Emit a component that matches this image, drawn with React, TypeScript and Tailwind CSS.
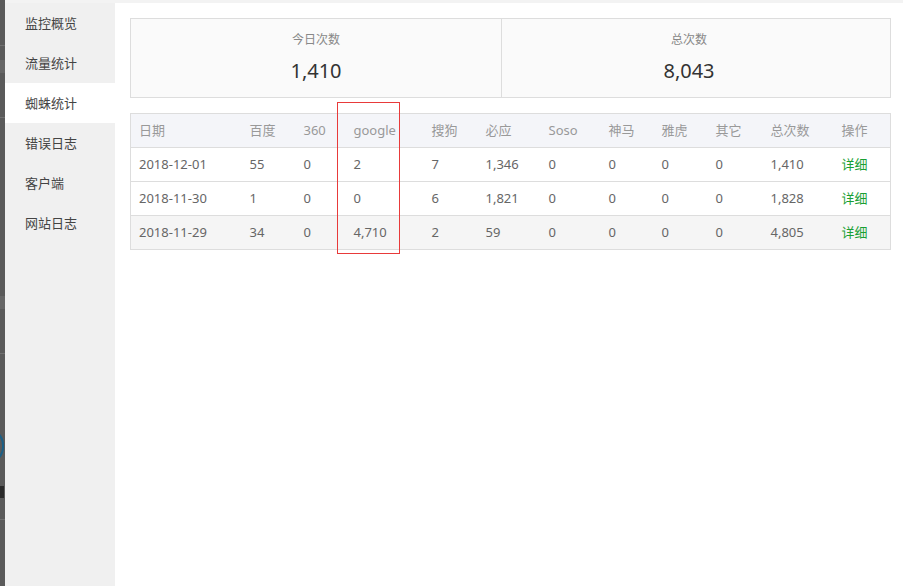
import React from "react";

const menu = ["监控概览", "流量统计", "蜘蛛统计", "错误日志", "客户端", "网站日志"];
const cols: { t: string; w: number }[] = [
  { t: "日期", w: 111 },
  { t: "百度", w: 54 },
  { t: "360", w: 50 },
  { t: "google", w: 78 },
  { t: "搜狗", w: 54 },
  { t: "必应", w: 63 },
  { t: "Soso", w: 60 },
  { t: "神马", w: 53 },
  { t: "雅虎", w: 54 },
  { t: "其它", w: 55 },
  { t: "总次数", w: 71 },
  { t: "操作", w: 57 },
];
const rows = [
  ["2018-12-01", "55", "0", "2", "7", "1,346", "0", "0", "0", "0", "1,410"],
  ["2018-11-30", "1", "0", "0", "6", "1,821", "0", "0", "0", "0", "1,828"],
  ["2018-11-29", "34", "0", "4,710", "2", "59", "0", "0", "0", "0", "4,805"],
];

export default function App() {
  return (
    <div
      className="flex w-[903px] h-[586px] overflow-hidden bg-white"
      style={{ fontFamily: '"Noto Sans", "Noto Sans CJK SC", sans-serif' }}
    >
      {/* dimmed background strip */}
      <div className="relative w-[5px] h-full bg-[#5a5a5a] shrink-0 overflow-hidden">
        <div className="absolute left-0 top-[45px] w-[5px] h-px bg-[#707070]" />
        <div className="absolute left-0 top-[60px] w-[5px] h-[13px] bg-[#666]" />
        <div className="absolute left-0 top-[117px] w-[5px] h-px bg-[#707070]" />
        <div className="absolute left-0 top-[296px] w-[5px] h-[13px] bg-[#666]" />
        <div className="absolute left-0 top-[353px] w-[5px] h-px bg-[#707070]" />
        <div className="absolute left-[-30px] top-[428px] w-[34px] h-[36px] rounded-full border-2 border-[#1b5f86]" />
        <div className="absolute left-0 top-[486px] w-[4px] h-[12px] bg-[#2a2a2a]" />
        <div className="absolute left-0 top-[519px] w-[5px] h-px bg-[#707070]" />
      </div>
      <div className="flex flex-col flex-1 h-full">
        <div className="h-[3px] bg-[#f3f3f3] shrink-0" />
        <div className="flex flex-1">
          {/* sidebar */}
          <div className="w-[110px] bg-[#f0f0f0] shrink-0">
            {menu.map((m, i) => (
              <div
                key={m}
                className={`h-[40px] flex items-center pl-[20px] pt-[1px] text-[13px] text-[#444] ${
                  i === 2 ? "bg-white" : ""
                }`}
              >
                {m}
              </div>
            ))}
          </div>
          {/* main */}
          <div className="flex-1 pl-[15px] pr-[13px] pt-[15px]">
            <div className="flex h-[80px] border border-[#dddddd] bg-[#fafafa]">
              <div className="w-[371px] flex flex-col items-center border-r border-[#dddddd]">
                <div className="mt-[12px] text-[12px] leading-[18px] text-[#888]">今日次数</div>
                <div className="mt-[10px] text-[20px] leading-[24px] text-[#333]">1,410</div>
              </div>
              <div className="flex-1 flex flex-col items-center pr-[14px]">
                <div className="mt-[12px] text-[12px] leading-[18px] text-[#888]">总次数</div>
                <div className="mt-[10px] text-[20px] leading-[24px] text-[#333]">8,043</div>
              </div>
            </div>
            <div className="relative mt-[15px]">
              <table className="border-collapse table-fixed w-[760px] border border-[#dddddd] text-[13px]">
                <colgroup>
                  {cols.map((c) => (
                    <col key={c.t} style={{ width: c.w }} />
                  ))}
                </colgroup>
                <thead>
                  <tr className="h-[34px] bg-[#f4f5f9]">
                    {cols.map((c) => (
                      <th key={c.t} className="text-left font-normal pl-[8px] text-[#999] whitespace-nowrap">
                        {c.t}
                      </th>
                    ))}
                  </tr>
                </thead>
                <tbody>
                  {rows.map((r, i) => (
                    <tr
                      key={i}
                      className={`h-[34px] border-t border-[#dddddd] ${i === 2 ? "bg-[#f5f5f5]" : "bg-white"}`}
                    >
                      {r.map((v, j) => (
                        <td key={j} className="pl-[8px] text-[#666] whitespace-nowrap">
                          {v}
                        </td>
                      ))}
                      <td className="pl-[8px] text-[#1aa034]">详细</td>
                    </tr>
                  ))}
                </tbody>
              </table>
              <div className="absolute left-[207px] top-[-11px] w-[63px] h-[152px] border border-[#e83a3a] pointer-events-none" />
            </div>
          </div>
        </div>
      </div>
    </div>
  );
}
